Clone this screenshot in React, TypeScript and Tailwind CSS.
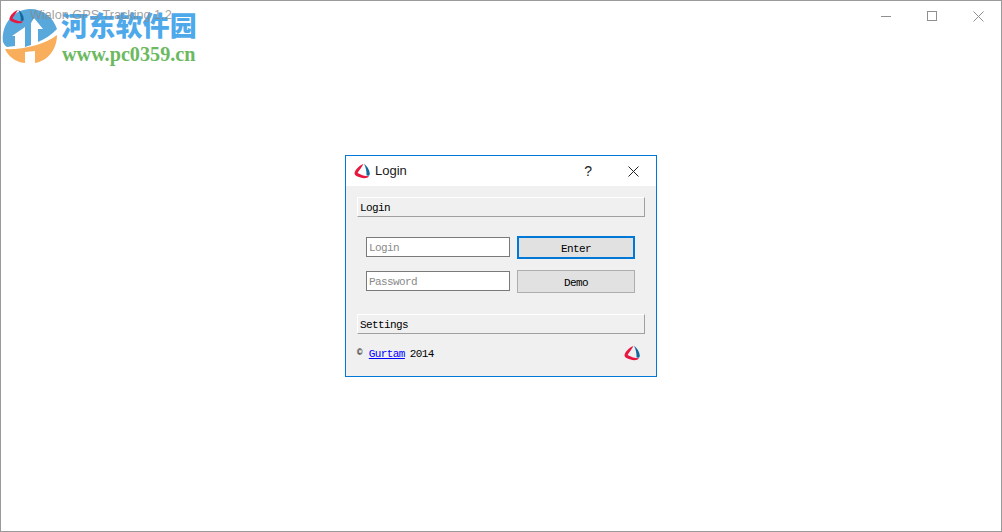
const mono = 'font-["Liberation_Mono","Noto_Sans_CJK_SC",monospace]';

const WialonLogo = ({ size }: { size: number }) => (
  <svg width={size} height={size} viewBox="0 0 16 16" fill="none">
    <path d="M9.5 1 C6 2 1.5 6 0.5 10 C0.5 11.5 1.5 12.5 3 13.3 C6 14.8 10 15.8 13 14.8 C14 14.4 14.5 14 15 13.3 C11 13.3 7 12 3.6 10 C5 7.5 7.5 4.5 9.5 1 Z" fill="#e8173f" />
    <path d="M10 0.8 C13 3 15.5 7 15.8 10.5 C15.8 11.5 15.5 12.2 15 12.8 L12.5 12.6 C12.8 8.5 11.8 4.5 10 0.8 Z" fill="#12699c" />
  </svg>
);

const GroupBar = ({ label }: { label: string }) => (
  <div className="flex h-5 items-center border-t border-l border-t-white border-l-white border-r border-b border-r-[#a0a0a0] border-b-[#a0a0a0] pt-[3px] pl-[2px] text-[11px] tracking-[-0.6px] text-black">
    {label}
  </div>
);

const Field = ({ placeholder }: { placeholder: string }) => (
  <div className="mt-px flex h-5 w-[144px] items-center self-start border border-[#7a7a7a] bg-white pt-[2px] pl-[2px] text-[11px] tracking-[-0.6px] text-[#8a8a8a]">
    {placeholder}
  </div>
);

export default function App() {
  return (
    <div className="relative flex h-[532px] w-[1002px] items-center justify-center overflow-hidden border border-[#9a9a9a] bg-white">
      {/* 透かしロゴ */}
      <div className="absolute top-0 left-0 h-[66px] w-[200px]">
        <svg className="absolute top-0 left-0" width="60" height="66" viewBox="0 0 60 66">
          <path d="M2 41 C0 22 14 8 29 8 C42 8 52 16 56 28 C50 34 44 38 37 41 L37 28 L42 28 L33 17 L30 22 L30 44 L24 46 L24 26 L11 35 L14 35 L14 45 L6 46 C4 45 3 43 2 41 Z" fill="#58a8dc" />
          <path d="M4 48 C20 49 44 44 56 34 C56 48 47 60 34 62 L34 50 L24 51 L24 62 C14 61 7 55 4 48 Z" fill="#f9ae5b" />
        </svg>
        <div className='absolute top-[7px] left-[60px] font-["Noto_Sans_CJK_SC",sans-serif] text-[27px] leading-[34px] font-black tracking-[0.2px] whitespace-nowrap text-[#4ea9ea]'>
          河东软件园
        </div>
        <div className='absolute top-[41px] left-[61px] font-["Liberation_Serif",serif] text-[20.2px] leading-6 font-bold whitespace-nowrap text-[#6cb95f]'>
          www.pc0359.cn
        </div>
      </div>

      {/* 親ウィンドウのタイトルバー */}
      <div className="absolute top-0 right-0 left-0 flex h-[30px] items-center pl-2">
        <WialonLogo size={15} />
        <span className='ml-[6px] font-["Liberation_Sans",sans-serif] text-[12.7px] text-[#8a8a8a]/80'>Wialon GPS Tracking 1.2</span>
        <div className="ml-auto flex items-center text-[#8f8f8f]">
          <div className="flex h-[30px] w-[46px] items-center justify-center">
            <div className="h-px w-[10px] bg-[#8f8f8f]" />
          </div>
          <div className="flex h-[30px] w-[46px] items-center justify-center">
            <div className="h-[10px] w-[10px] border border-[#8f8f8f]" />
          </div>
          <div className="flex h-[30px] w-[46px] items-center justify-center">
            <svg width="11" height="11" viewBox="0 0 11 11" stroke="#8f8f8f" fill="none">
              <path d="M0.5 0.5 L10.5 10.5 M10.5 0.5 L0.5 10.5" />
            </svg>
          </div>
        </div>
      </div>

      {/* ログインダイアログ */}
      <div className={`${mono} flex h-[222px] w-[312px] flex-col border border-[#0078d7] bg-[#f0f0f0]`}>
        <div className="flex h-[30px] items-center bg-white pl-2">
          <WialonLogo size={16} />
          <span className='ml-[5px] font-["Liberation_Sans",sans-serif] text-[13px] text-[#1a1a1a]'>Login</span>
          <span className='ml-auto font-["Liberation_Sans",sans-serif] text-[14px] text-[#222]'>?</span>
          <svg className="mr-[17px] ml-[36px]" width="11" height="11" viewBox="0 0 11 11" stroke="#222" fill="none">
            <path d="M0.5 0.5 L10.5 10.5 M10.5 0.5 L0.5 10.5" />
          </svg>
        </div>

        <div className="flex flex-1 flex-col px-[11px] pt-[11px]">
          <GroupBar label="Login" />

          <div className="mt-[19px] grid grid-cols-[144px_118px] items-center gap-x-[7px] gap-y-[11px] pl-[9px]">
            <Field placeholder="Login" />
            <button className="flex h-[23px] items-center justify-center border-2 border-[#0078d7] bg-[#e1e1e1] pt-[3px] text-[11px] tracking-[-0.6px] text-black">
              Enter
            </button>
            <Field placeholder="Password" />
            <button className="flex h-[23px] items-center justify-center border border-[#adadad] bg-[#e1e1e1] pt-[3px] text-[11px] tracking-[-0.6px] text-black">
              Demo
            </button>
          </div>

          <div className="mt-[21px]">
            <GroupBar label="Settings" />
          </div>

          <div className="mt-[9px] flex h-5 items-center pt-[2px] text-[11px] tracking-[-0.6px] text-black">
            <span className="text-[9px]">©</span>
            <a className="ml-[7px] text-[#0000ff] underline" href="#">Gurtam</a>
            <span className="ml-[5px]">2014</span>
            <div className="mr-[5px] mb-[2px] ml-auto">
              <WialonLogo size={16} />
            </div>
          </div>
        </div>
      </div>
    </div>
  );
}
